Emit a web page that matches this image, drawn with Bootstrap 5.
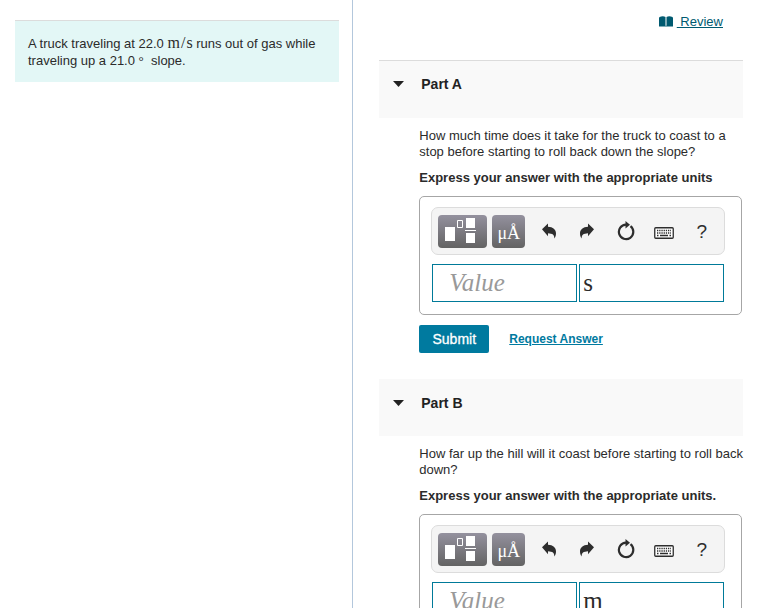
<!DOCTYPE html>
<html lang="en">
<head>
<meta charset="utf-8">
<meta name="viewport" content="width=device-width, initial-scale=1">
<title>Truck on a slope</title>
<link rel="stylesheet" href="https://cdn.jsdelivr.net/npm/bootstrap@5.3.0/dist/css/bootstrap.min.css">
<style>
  body { font: 13px/16px "Liberation Sans", Arial, sans-serif; color: #2b2b2b; background: #fff; }
  .pane { scrollbar-width: none; }
  .pane::-webkit-scrollbar { display: none; }
  .pane-problem { flex: 0 0 46%; border-right: 1px solid #b3c7dc; padding: 20px 13px 20px 15px; }
  .pane-parts { flex: 1 1 0; min-width: 0; padding: 13px 25px 20px 26px; }
  .problem { background: #e3f7f6; border-top: 1px solid #dcdcdc; padding: 14px 13px 13px; line-height: 17px; }
  .unit { font-family: "Liberation Serif", serif; font-size: 16px; line-height: 16px; }
  .slash { margin: 0 1px; }
  .degree { font-family: "Liberation Serif", serif; }
  .review { color: #005a70; padding-right: 20px; margin-bottom: 30px; height: 17px; }
  .review a { color: inherit; white-space: pre; }
  .part-head { background: #f9f9f9; height: 57px; padding: 15px 14px; }
  .part-head.first { border-top: 1px solid #dcdcdc; height: 58px; padding-top: 14px; }
  .part-head button { font-size: 14px; line-height: 18px; gap: 17px; color: #222; }
  .part-body { padding: 10px 0 26px 40px; }
  .question { margin: 0 -4px 10px 0; }
  .hint { margin-bottom: 10px; font-weight: 700; }
  .answer { border: 1px solid #a6a6a6; border-radius: 5px; padding: 10px 16px 12px 11px; margin-right: 1px; }
  .tools { background: #f4f4f4; border: 1px solid #dcdcdc; border-radius: 7px; height: 48px; padding: 0 3px 0 6px; margin-bottom: 9px; }
  .tool-dark { height: 33px; border-radius: 4px; background: linear-gradient(#94919e, #636363); color: #fff; }
  .tool-tpl { width: 49px; margin-right: 5px; }
  .tool-unit { width: 33px; margin-right: 5px; font: 18px/36px "Liberation Serif", serif; }
  .tool-plain { flex: 1 1 0; color: #2d2d2d; height: 33px; }
  .help { font-size: 19px; line-height: 33px; }
  .fields { gap: 2px; padding: 0 1px; }
  .field { height: 38px; border: 1px solid #007a99; color: #2b2b2b; font: 25px/36px "Liberation Serif", serif; }
  .field-value { padding: 0 16px; }
  .field-unit { padding: 0 3px; }
  .field-value::placeholder { color: #999; font-style: italic; opacity: 1; }
  .actions { margin-top: 10px; gap: 20px; }
  .submit { width: 70px; height: 28px; background: #007a9f; color: #fff; border-radius: 2px; font-size: 14px; -webkit-text-stroke: .3px #fff; }
  .request { color: #007a9f; font-size: 12px; font-weight: 700; }
</style>
<script defer src="https://cdn.jsdelivr.net/npm/bootstrap@5.3.0/dist/js/bootstrap.bundle.min.js"></script>
</head>
<body>
<svg class="d-none" aria-hidden="true">
  <symbol id="i-tpl" viewBox="0 0 49 33">
    <path fill="#fff" d="M7 12h10v14H7zM28 3h9v10h-9zM28 18h9v10h-9zM27 15h11v1H27z"/>
    <path fill="none" stroke="#fff" d="M19.500 5.500h5v7h-5z"/>
  </symbol>
  <symbol id="i-undo" viewBox="0 0 14 16">
    <path fill="currentColor" d="M0 6.200 6 .5v3.300c5 .2 8 2.700 8 6.700 0 2-.6 3.600-1.700 5 .2-3.500-1.700-5-6.300-5.200v3z"/>
  </symbol>
  <symbol id="i-reset" viewBox="0 0 18 20">
    <path fill="none" stroke="currentColor" stroke-width="2.200" d="M13.500 5.200A7.200 7.200 0 1 1 9 3.700"/>
    <path fill="currentColor" d="M8.500 0 13 3.800 8.500 7.500z"/>
  </symbol>
  <symbol id="i-keys" viewBox="0 0 20 12">
    <rect x=".75" y=".75" width="18.500" height="10.500" rx="1" fill="#fff" stroke="currentColor" stroke-width="1.300"/>
    <path stroke="currentColor" stroke-width="1.300" stroke-dasharray="1.300 .9" d="M3 3.500h14M3 6h14"/>
    <path stroke="currentColor" stroke-width="1.300" d="M3 8.500h1.500M6 8.500h8M15.500 8.500H17"/>
  </symbol>
</svg>

<main class="d-flex vh-100">
  <section class="pane pane-problem overflow-auto">
    <div class="problem">A truck traveling at 22.0 <span class="unit">m<span class="slash">/</span>s</span> runs out of gas while traveling up a 21.0 <span class="degree">°</span>&nbsp; slope.</div>
  </section>

  <section class="pane pane-parts overflow-auto">
    <div class="review d-flex align-items-center justify-content-end">
      <svg width="14" height="11" viewBox="0 0 14 11" class="me-1" aria-hidden="true"><path fill="currentColor" d="M.5 1Q4-.5 6.500 1v9Q4 9 .5 10zM7.500 1Q10-.5 13.500 1v9Q10 9 7.500 10zM0 1.500h1v8h5.500l.5.500.5-.5H13v-8h1v9H0z"/></svg>
      <a href="#"> Review</a>
    </div>

    <article>
      <header class="part-head first">
        <button type="button" class="btn p-0 border-0 d-flex align-items-center fw-bold" aria-expanded="true"><svg width="11" height="6" viewBox="0 0 11 6" aria-hidden="true"><path fill="currentColor" d="M0 0h11L5.500 6z"/></svg>Part A</button>
      </header>
      <div class="part-body">
        <p class="question">How much time does it take for the truck to coast to a stop before starting to roll back down the slope?</p>
        <p class="hint">Express your answer with the appropriate units</p>
        <div class="answer">
          <div class="tools d-flex align-items-center">
            <button type="button" class="btn p-0 border-0 tool-dark tool-tpl d-flex" aria-label="Templates"><svg width="49" height="33"><use href="#i-tpl"/></svg></button>
            <button type="button" class="btn p-0 border-0 tool-dark tool-unit">μÅ</button>
            <button type="button" class="btn p-0 border-0 tool-plain d-flex align-items-center justify-content-center" aria-label="Undo"><svg width="14" height="16"><use href="#i-undo"/></svg></button>
            <button type="button" class="btn p-0 border-0 tool-plain d-flex align-items-center justify-content-center" aria-label="Redo"><svg width="14" height="16" viewBox="0 0 14 16"><use href="#i-undo" width="14" height="16" transform="matrix(-1 0 0 1 14 0)"/></svg></button>
            <button type="button" class="btn p-0 border-0 tool-plain d-flex align-items-center justify-content-center" aria-label="Reset"><svg width="18" height="20"><use href="#i-reset"/></svg></button>
            <button type="button" class="btn p-0 border-0 tool-plain d-flex align-items-center justify-content-center pt-1" aria-label="Keyboard shortcuts"><svg width="20" height="12"><use href="#i-keys"/></svg></button>
            <button type="button" class="btn p-0 border-0 tool-plain help">?</button>
          </div>
          <div class="fields d-flex">
            <input class="field field-value w-50" type="text" placeholder="Value" aria-label="Value">
            <input class="field field-unit w-50" type="text" value="s" aria-label="Units">
          </div>
        </div>
        <div class="actions d-flex align-items-center">
          <button type="submit" class="btn p-0 border-0 submit">Submit</button>
          <a class="request" href="#">Request Answer</a>
        </div>
      </div>
    </article>

    <article>
      <header class="part-head">
        <button type="button" class="btn p-0 border-0 d-flex align-items-center fw-bold" aria-expanded="true"><svg width="11" height="6" viewBox="0 0 11 6" aria-hidden="true"><path fill="currentColor" d="M0 0h11L5.500 6z"/></svg>Part B</button>
      </header>
      <div class="part-body">
        <p class="question">How far up the hill will it coast before starting to roll back down?</p>
        <p class="hint">Express your answer with the appropriate units.</p>
        <div class="answer">
          <div class="tools d-flex align-items-center">
            <button type="button" class="btn p-0 border-0 tool-dark tool-tpl d-flex" aria-label="Templates"><svg width="49" height="33"><use href="#i-tpl"/></svg></button>
            <button type="button" class="btn p-0 border-0 tool-dark tool-unit">μÅ</button>
            <button type="button" class="btn p-0 border-0 tool-plain d-flex align-items-center justify-content-center" aria-label="Undo"><svg width="14" height="16"><use href="#i-undo"/></svg></button>
            <button type="button" class="btn p-0 border-0 tool-plain d-flex align-items-center justify-content-center" aria-label="Redo"><svg width="14" height="16" viewBox="0 0 14 16"><use href="#i-undo" width="14" height="16" transform="matrix(-1 0 0 1 14 0)"/></svg></button>
            <button type="button" class="btn p-0 border-0 tool-plain d-flex align-items-center justify-content-center" aria-label="Reset"><svg width="18" height="20"><use href="#i-reset"/></svg></button>
            <button type="button" class="btn p-0 border-0 tool-plain d-flex align-items-center justify-content-center pt-1" aria-label="Keyboard shortcuts"><svg width="20" height="12"><use href="#i-keys"/></svg></button>
            <button type="button" class="btn p-0 border-0 tool-plain help">?</button>
          </div>
          <div class="fields d-flex">
            <input class="field field-value w-50" type="text" placeholder="Value" aria-label="Value">
            <input class="field field-unit w-50" type="text" value="m" aria-label="Units">
          </div>
        </div>
      </div>
    </article>
  </section>
</main>
</body>
</html>
